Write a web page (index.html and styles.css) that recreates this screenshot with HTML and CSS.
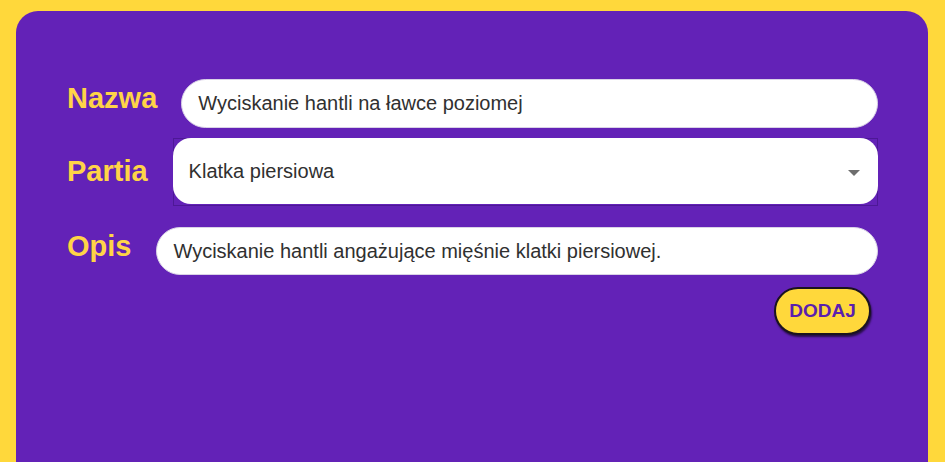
FILE: index.html
```html
<!DOCTYPE html>
<html lang="pl">
<head>
<meta charset="utf-8">
<title>Dodaj ćwiczenie</title>
<link rel="stylesheet" href="styles.css">
</head>
<body>
<div class="panel">
  <form class="form">
    <div class="row row-name">
      <label class="label">Nazwa</label>
      <div class="field">Wyciskanie hantli na ławce poziomej</div>
    </div>
    <div class="row row-part">
      <label class="label">Partia</label>
      <div class="select-wrap">
        <div class="select">
          <span>Klatka piersiowa</span>
          <span class="caret"></span>
        </div>
      </div>
    </div>
    <div class="row row-desc">
      <label class="label">Opis</label>
      <div class="field">Wyciskanie hantli angażujące mięśnie klatki piersiowej.</div>
    </div>
    <div class="actions">
      <button type="button" class="btn">DODAJ</button>
    </div>
  </form>
</div>
</body>
</html>
```
FILE: styles.css
```css
html, body {
  margin: 0;
  padding: 0;
  background: #ffd83b;
  height: 462px;
  overflow: hidden;
}
body {
  padding: 11px 17px 0 16px;
  box-sizing: border-box;
  font-family: "Liberation Sans", Arial, sans-serif;
}
.panel {
  background: #6322b7;
  border-radius: 22px 22px 0 0;
  height: 451px;
  padding: 68px 50px 0 51px;
  box-sizing: border-box;
}
.form {
  display: flex;
  flex-direction: column;
}
.row {
  display: flex;
  align-items: center;
  gap: 24px;
}
.label {
  color: #ffd447;
  font-weight: bold;
  font-size: 29px;
  line-height: 34px;
  flex: none;
}
.row-name .label { margin-top: -11px; }
.row-part .label { margin-top: -2px; margin-right: 1px; }
.row-desc .label { margin-top: -11px; margin-right: 1px; }
.field {
  flex: 1;
  background: #fff;
  border-radius: 25px;
  height: 48px;
  display: flex;
  align-items: center;
  padding-left: 16px;
  font-size: 20px;
  color: #303030;
  box-sizing: border-box;
  border: 1px solid #d9d2e6;
}
.row-name .field { height: 49px; }
.row-part { margin-top: 10px; }
.row-desc { margin-top: 21px; }
.select-wrap {
  flex: 1;
  border: 1px solid #4d1896;
  height: 68px;
  box-sizing: border-box;
}
.select {
  background: #fff;
  border-radius: 18px;
  height: 100%;
  display: flex;
  align-items: center;
  justify-content: space-between;
  padding: 0 18px 0 16px;
  font-size: 20px;
  color: #303030;
  margin: -1px;
}
.caret {
  width: 0;
  height: 0;
  border-left: 6px solid transparent;
  border-right: 6px solid transparent;
  border-top: 6px solid #6e6e6e;
  margin-top: 3px;
}
.actions {
  display: flex;
  justify-content: flex-end;
  margin-top: 12px;
  padding-right: 7px;
}
.btn {
  background: #ffd83b;
  color: #5b1fae;
  font-family: "Liberation Sans", Arial, sans-serif;
  font-weight: bold;
  font-size: 19px;
  border: 2px solid #1a1320;
  border-radius: 24px;
  width: 97px;
  height: 48px;
  padding: 0;
  box-shadow: 1px 2px 2px rgba(0,0,0,0.6);
}
```
